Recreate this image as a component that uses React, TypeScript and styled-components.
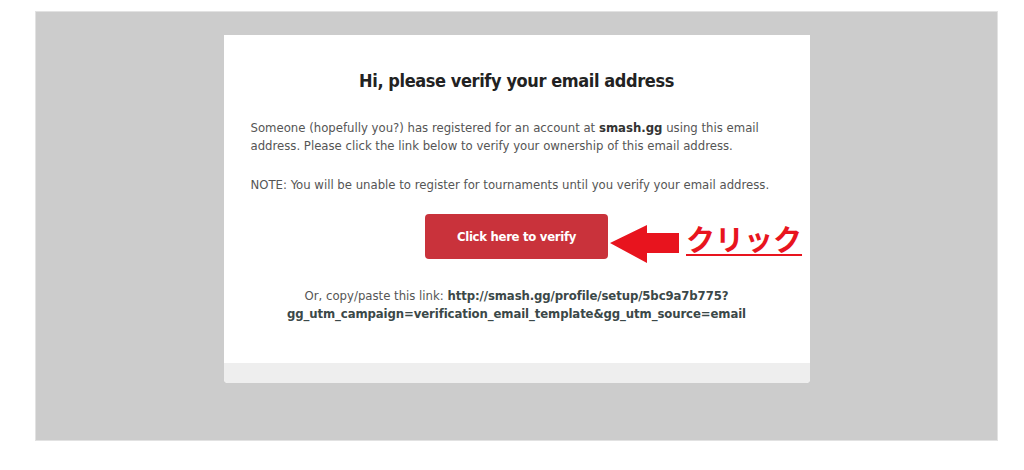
import React from 'react'
import styled, { createGlobalStyle } from 'styled-components'

const GlobalStyle = createGlobalStyle`
  html, body {
    margin: 0;
    padding: 0;
    background: #fff;
  }
  body {
    font-family: "DejaVu Sans Condensed", "DejaVu Sans", sans-serif;
  }
`

const Frame = styled.div`
  box-sizing: border-box;
  width: 963px;
  height: 430px;
  margin: 11px 0 0 35px;
  padding-top: 23px;
  background: #cccccc;
  border: 1px solid #e2e2e2;
`

const Card = styled.div`
  width: 586px;
  margin: 0 auto;
  background: #fff;
  border-radius: 0 0 4px 4px;
  overflow: hidden;
`

const Content = styled.div`
  padding: 34px 16px 40px 27px;
  color: #555;
  font-size: 13px;
  line-height: 18px;
`

const Heading = styled.h1`
  margin: 0 0 26px;
  padding-right: 11px;
  text-align: center;
  font-size: 18px;
  line-height: 24px;
  font-weight: 700;
  letter-spacing: -0.4px;
  color: #222;
`

const Paragraph = styled.p`
  margin: 0 0 21px;
`

const Strong = styled.b`
  color: #333;
`

const ButtonRow = styled.div`
  display: flex;
  justify-content: center;
  margin-bottom: 28px;
  padding-right: 11px;
`

const ButtonWrap = styled.div`
  position: relative;
`

const VerifyButton = styled.a`
  display: flex;
  align-items: center;
  justify-content: center;
  width: 183px;
  height: 45px;
  margin-top: -1px;
  border-radius: 4px;
  background: #c9323b;
  color: #fff;
  font-size: 13px;
  font-weight: 700;
  letter-spacing: -0.3px;
  text-decoration: none;
`

const Annotation = styled.div`
  position: absolute;
  left: calc(100% + 2px);
  top: 9px;
  display: flex;
  align-items: flex-start;
  gap: 6px;
  white-space: nowrap;
`

const ClickLabel = styled.span`
  margin-top: -5px;
  font-family: "Noto Sans CJK JP", sans-serif;
  font-size: 29px;
  line-height: 38px;
  font-weight: 700;
  color: #e8141e;
  text-decoration: underline;
  text-decoration-thickness: 2px;
  text-underline-offset: 3px;
`

const LinkBlock = styled.p`
  margin: 1px 0 0;
  padding-right: 11px;
  text-align: center;
`

const Link = styled.a`
  color: #3b4848;
  font-weight: 700;
  letter-spacing: -0.1px;
  text-decoration: none;
`

const FooterBand = styled.div`
  height: 20px;
  background: #eeeeee;
`

const Arrow = () => (
  <svg width="70" height="40" viewBox="0 0 70 40">
    <polygon
      points="0,19 37,1 37,9 69,9 69,29 37,29 37,39"
      fill="#e8141e"
    />
  </svg>
)

const App: React.FC = () => {
  return (
    <>
      <GlobalStyle />
      <Frame>
        <Card>
          <Content>
            <Heading>Hi, please verify your email address</Heading>
            <Paragraph>
              Someone (hopefully you?) has registered for an account at{' '}
              <Strong>smash.gg</Strong> using this email address. Please click
              the link below to verify your ownership of this email address.
            </Paragraph>
            <Paragraph>
              NOTE: You will be unable to register for tournaments until you
              verify your email address.
            </Paragraph>
            <ButtonRow>
              <ButtonWrap>
                <VerifyButton href="#">Click here to verify</VerifyButton>
                <Annotation>
                  <Arrow />
                  <ClickLabel>クリック</ClickLabel>
                </Annotation>
              </ButtonWrap>
            </ButtonRow>
            <LinkBlock>
              Or, copy/paste this link:{' '}
              <Link href="#">
                http://smash.gg/profile/setup/5bc9a7b775?
                <br />
                gg_utm_campaign=verification_email_template&amp;gg_utm_source=email
              </Link>
            </LinkBlock>
          </Content>
          <FooterBand />
        </Card>
      </Frame>
    </>
  )
}

export default App
